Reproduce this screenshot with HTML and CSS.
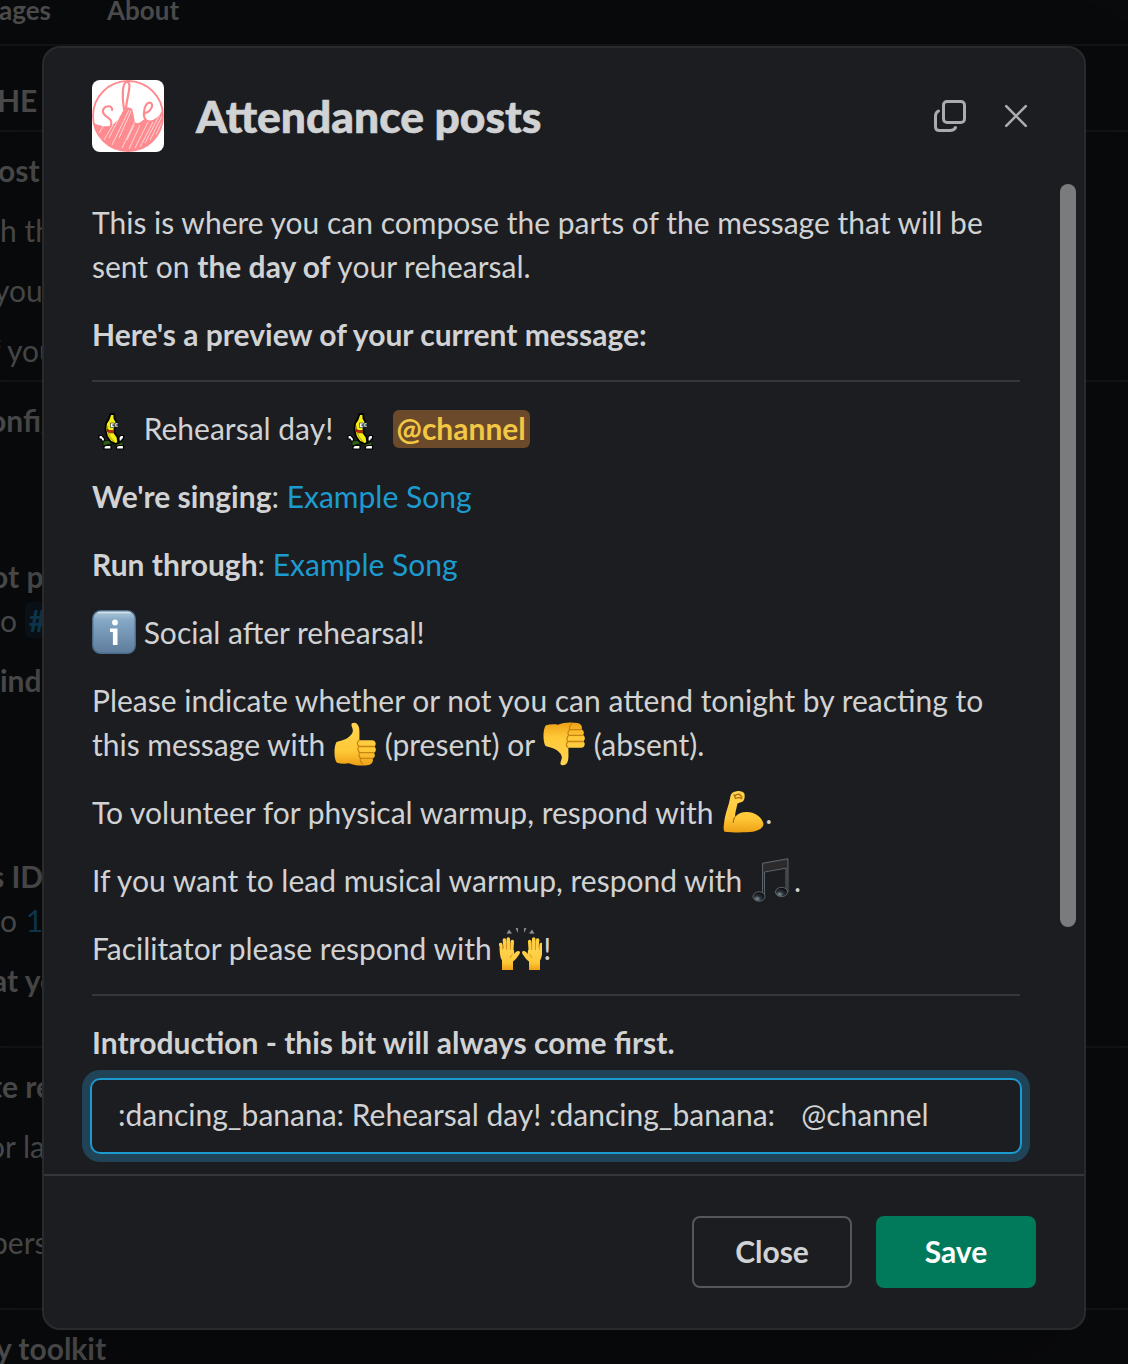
FILE: index.html
```html
<!DOCTYPE html>
<html lang="en">
<head>
<meta charset="utf-8">
<title>Attendance posts</title>
<link rel="stylesheet" href="styles.css">
</head>
<body>
<svg width="0" height="0" class="defs" aria-hidden="true">
  <defs>
    <linearGradient id="skin" x1="0" y1="0" x2="0" y2="1"><stop offset="0" stop-color="#ffd451"/><stop offset=".65" stop-color="#ffc937"/><stop offset="1" stop-color="#eda016"/></linearGradient>
    <linearGradient id="tile" x1="0" y1="0" x2="0" y2="1"><stop offset="0" stop-color="#b4cadb"/><stop offset=".22" stop-color="#84a8c6"/><stop offset="1" stop-color="#5e7c9b"/></linearGradient>
    <linearGradient id="note" x1="0" y1="0" x2="0" y2="1"><stop offset="0" stop-color="#3c3a3b"/><stop offset="1" stop-color="#18191d"/></linearGradient>
    <radialGradient id="ball" cx=".35" cy=".75" r=".7"><stop offset="0" stop-color="#84939e"/><stop offset=".45" stop-color="#2a3238"/><stop offset="1" stop-color="#0b0d10"/></radialGradient>
    <symbol id="banana" viewBox="0 0 44 44">
      <path fill="#2f5c16" stroke="#0b1a05" d="M11 34.500h7l4 3h5l4-2v5h-6l-5-3-4 1-5 1.500z"/>
      <path fill="#f3ec16" stroke="#000" stroke-width="1.800" d="M18.500 8h3.700l.3 4.500 2 3.500-.5 4-1.500 2.500v4.500l3 4 .8 5.500-2.300 1.500-5.500-2.500-3.500-5-1.500-6.500.5-6.500 2.500-4z"/>
      <path fill="none" stroke="#b9ab0d" stroke-width="1.200" d="M15.500 20v5l2.500 6 4 5"/>
      <path fill="#fff" stroke="#222" stroke-width=".6" d="M18.500 17h3.800v4.500h-3.800zM23 17h3v4h-3z"/>
      <path fill="#35535f" d="M20.500 18.200h1.800v2h-1.800zM24.300 18h1.700v2h-1.700z"/>
      <path fill="#d8210b" stroke="#5b0c04" stroke-width=".6" d="M15 23l2.500 1.500h4v2.300h-4L15 25z"/>
      <g fill="#fff" stroke="#000" stroke-width="1.200">
        <path d="M7 29.500h3l2.500 3V35H10l-1-2H7zM31.500 29.500h-3l-1.500 2V35h2.500l.8-2h1.200zM12 40.500l2-1h5V43h-7zM24.500 40.500l2-1h5V43h-7z"/>
      </g>
    </symbol>
    <symbol id="thumb" viewBox="0 0 44 44">
      <path fill="url(#skin)" d="M19 1.200c3-1.500 6 .4 7 4.200.8 3.300.3 8.600.4 12.800H39c4 0 4.800 4.600 2.300 6.500 2.300 1.600 2 4.900-.3 6.200 1.500 1.800 1 4.700-1.500 5.500 1.200 2.600-.2 5.800-3.800 6.500-6.500 1.200-13.700 1-19.700-1.600-4.200.7-8.600.5-12-.6C1 37.500.5 25 3.500 20c3-1.200 7.500-1.700 10.700-3.800C17.500 14 20.300 11 19.800 8 19.500 5.500 17.500 3 19 1.200z"/>
      <path fill="none" stroke="#cb8413" stroke-width="1.300" stroke-linecap="round" d="M26 18.500c-2 1.300-2.300 4.300 0 5.900-1.600 1.700-1.300 4.900.7 6.200-1.300 1.700-.8 4.400 1 5.400-.8 2 0 5 2 6M26.500 24.500H41M27 30.700h13.500M28 36.300h11"/>
    </symbol>
    <symbol id="arm" viewBox="0 0 44 44">
      <path fill="url(#skin)" d="M9.500 6c.5-3 3-4.600 5.500-4.600 3.500-1 7.500.3 8.300 2.200.7 2.500.5 6.500-1.500 8-1.700 1-3.600 1.100-5.300 2-1 4.500-2.500 9.500-2.500 13.500 3-3.700 7-5.300 12-5.100 8.500.3 15.500 5.500 16.500 12-.5 5.500-8 8-17 8.300-7.500.2-15.500.2-22-.6C2 39.500 2.800 36 3.200 32c.6-6 3-13 4.800-19z"/>
      <path fill="none" stroke="#a96b14" stroke-width="1.200" stroke-linecap="round" d="M14.500 5.500c1.500-1.800 4-1.300 4.800 0M15 8.300c1.700-.8 3.800-.8 5.800.3M13 4.500l1.500 4M18 4l3 3M13.500 27.500c-.7 1.800-1.300 3-1.300 5"/>
    </symbol>
    <symbol id="music" viewBox="0 0 44 44">
      <g stroke="#68737c" stroke-width=".8">
        <path fill="url(#note)" d="M12.500 5.200 38 .7v33.500h-2V10.200L14.500 14v25h-2z"/>
        <path fill="#2d2a2b" d="M13.500 6.300 37 2v7.200l-23.500 4z" stroke="none"/>
        <ellipse cx="9" cy="38.500" rx="6" ry="4.700" fill="url(#ball)"/>
        <ellipse cx="31.500" cy="34" rx="6" ry="4.700" fill="url(#ball)"/>
      </g>
    </symbol>
    <symbol id="hands" viewBox="0 0 44 44">
      <g id="one-hand">
        <path fill="none" stroke="#ffce42" stroke-width="3.500" stroke-linecap="round" d="M2.700 18.500 5 27M6.400 14 7.500 26M10.300 13l.2 13M14.300 15.500 13.500 27"/>
        <path fill="url(#skin)" d="M4 44V34.500C1.800 31 1.800 26 1.500 22L16 24l.3 4c1.200-1.600 2.500-3 4.300-2.900 1.700.3 1.700 1.800.7 3.100-2 2.500-3.500 5.500-6.300 7.300V44z"/>
        <path fill="none" stroke="#cf8a18" stroke-width=".8" d="M4.700 19v5M8.500 17v7M12.400 17v7M14.800 28c-1.800 1-2.300 2.500-2.300 4"/>
      </g>
      <use href="#one-hand" transform="matrix(-1 0 0 1 46 0)"/>
      <path fill="#8d8f92" d="m11 3.500 3 4-5.500.3zM17.500 2l2.600.3-.3 4.700zM28.500 2l-2.600.3.300 4.700zM34 3.500l-3 4 5.500.3z"/>
    </symbol>
  </defs>
</svg>

<div class="page" aria-hidden="true">
  <nav class="tabs"><span>ages</span><span>About</span></nav>
  <div class="strip heading">HE</div>
  <div class="group">
    <p class="strong ost">ost</p>
    <p class="gap">h th</p>
    <p class="gap you">your</p>
    <p class="gap f-you">f your</p>
  </div>
  <div class="group config">
    <p class="strong onfig">onfig</p>
    <p class="strong space-lg clip-o">ot po</p>
    <p><span>o</span> <span class="tag">#r</span></p>
    <p class="strong gap">inder</p>
    <p class="strong space-xl clip-s">s ID:</p>
    <p><span>o</span> <span class="blue">16</span></p>
    <p class="strong gap clip-at">at you</p>
  </div>
  <div class="group reply">
    <p class="strong clip-te">te rep</p>
    <p class="gap or-last">or last</p>
    <p class="space-sm clip-p">pers</p>
  </div>
  <div class="group last"><p class="strong clip-y">y toolkit</p></div>
</div>

<section class="modal" role="dialog" aria-labelledby="title">
  <header class="modal-head">
    <svg class="logo" viewBox="0 0 72 72">
      <defs><clipPath id="disc"><circle cx="36" cy="36" r="35"/></clipPath></defs>
      <rect width="72" height="72" fill="#fff"/>
      <g clip-path="url(#disc)">
        <path fill="#fd8b90" d="M0 42c8 5 15 5 20 3 5-3 8-8 12-16 2-2 6-2 8 0 2 5 2 12 4 14 4 1 6-3 9-4 3 2 8 2 11-1 4-3 6-7 8-10v46H0z"/>
        <path stroke="#fff" stroke-width=".8" opacity=".8" d="M7 53l5-8M12 60l9-15M17 58l10-20M20 65l17-35M27 58l12-27M30 68l13-27M35 60l7-15M37 69l11-24M43 68l13-26M48 67l13-25M53 63l15-29M58 60l12-24M64 55l6-13"/>
      </g>
      <circle cx="36" cy="36" r="35" fill="none" stroke="#fd8b90" stroke-width="1.800"/>
      <path fill="none" stroke="#fd8b90" stroke-width="2.200" stroke-linecap="round" d="M20 30c1-5-7-5-9 0-2 7 11 7 8 15M32 29C30 18 30 2 35 2c6 0-1 17-1 28M53 33c5-1 9-7 6-10-4-2-7 4-7 10-.5 4 1 6 2 7"/>
    </svg>
    <h1 id="title">Attendance posts</h1>
    <svg class="head-icon" viewBox="0 0 40 40"><g fill="none" stroke="#ababad" stroke-width="3" stroke-linecap="round"><rect x="13.500" y="5.500" width="21" height="21" rx="3.500"/><path d="M8.500 15C6.500 16 5.500 17.500 5.500 20v10.500c0 2.500 1.500 4 4 4H20c2.500 0 4.500-1 5.500-3"/></g></svg>
    <svg class="head-icon close-icon" viewBox="0 0 40 40"><path fill="none" stroke="#ababad" stroke-width="2.600" stroke-linecap="round" d="m10.200 10.200 19.600 19.600m0-19.600L10.200 29.800"/></svg>
  </header>

  <div class="modal-body">
    <div class="content">
      <p>This is where you can compose the parts of the message that will be sent on <b>the day of</b> your rehearsal.</p>
      <p><b>Here's a preview of your current message:</b></p>
      <hr>
      <p><svg class="emoji"><use href="#banana"/></svg> Rehearsal day! <svg class="emoji"><use href="#banana"/></svg> <span class="mention">@channel</span></p>
      <p><b>We're singing</b>: <a>Example Song</a></p>
      <p><b>Run through</b>: <a>Example Song</a></p>
      <p><svg class="emoji" viewBox="0 0 44 44"><rect x=".7" y=".7" width="42.600" height="42.600" rx="8" fill="url(#tile)" stroke="#4c6c8b" stroke-width="1.400"/><path d="M6 2.500h32" stroke="#d6e2ea" stroke-width="1.500" stroke-linecap="round"/><circle cx="23" cy="12.500" r="2.900" fill="#fff"/><path fill="#fff" d="M18 18.500h7.500V35h-4.600V22H18z"/></svg> Social after rehearsal!</p>
      <p>Please indicate whether or not you can attend tonight by reacting to this message with <svg class="emoji"><use href="#thumb"/></svg> (present) or <svg class="emoji down"><use href="#thumb"/></svg> (absent).</p>
      <p>To volunteer for physical warmup, respond with <svg class="emoji"><use href="#arm"/></svg>.</p>
      <p>If you want to lead musical warmup, respond with <svg class="emoji"><use href="#music"/></svg>.</p>
      <p>Facilitator please respond with <svg class="emoji hands"><use href="#hands"/></svg>!</p>
      <hr>
      <label for="intro">Introduction - this bit will always come first.</label>
      <div class="field" id="intro">:dancing_banana: Rehearsal day! :dancing_banana: &nbsp; <span class="handle">@channel</span></div>
    </div>
    <div class="scrollbar"></div>
  </div>

  <footer class="modal-foot">
    <button class="btn">Close</button>
    <button class="btn primary">Save</button>
  </footer>
</section>
</body>
</html>
```
FILE: styles.css
```css
* { box-sizing: border-box; }

body {
  margin: 0;
  height: 1364px;
  overflow: hidden;
  position: relative;
  background: #090a0c;
  color: #d1d2d3;
  font: 30px/44px Lato, "Liberation Sans", sans-serif;
}

p, h1 { margin: 0; }
.defs { position: absolute; }

/* Dimmed page underneath the dialog */
.page { color: #4b4b4b; white-space: nowrap; }
.tabs {
  display: flex;
  gap: 56px;
  height: 46px;
  margin-left: -1px;
  border-bottom: 2px solid #131416;
  font-size: 26px;
  font-weight: 700;
  line-height: 20px;
}
.strip { height: 86px; padding-top: 32px; border-bottom: 2px solid #131416; }
.heading { font-weight: 700; }
.strip.heading { text-indent: -3px; }
.group { border-bottom: 2px solid #131416; height: 250px; padding-top: 16px; }
.group.config { height: 666px; }
.group.reply { height: 262px; }
.group.last { border: 0; height: 54px; }
.strong { font-weight: 700; }
.gap { margin-top: 16px; }
.space-sm { margin-top: 52px; }
.space-lg { margin-top: 112px; }
.space-xl { margin-top: 152px; }
.ost { text-indent: -2px; }
.you { text-indent: -6px; }
.f-you { text-indent: -10px; }
.onfig { text-indent: -11px; }
.or-last { text-indent: -12px; }
.clip-o { text-indent: -9px; }
.clip-p { text-indent: -9px; }
.clip-s { text-indent: -9px; }
.clip-at { text-indent: -8px; }
.clip-te { text-indent: -9px; }
.clip-y { text-indent: -4px; }
.tag { padding: 0 4px; border-radius: 6px; background: #0a1218; color: #0e3a52; font-weight: 700; }
.blue { color: #0e3a52; margin-left: 1px; }

/* Dialog */
.modal {
  position: absolute;
  left: 42px;
  top: 46px;
  width: 1044px;
  height: 1284px;
  display: flex;
  flex-direction: column;
  border: 2px solid #292a2c;
  border-radius: 18px;
  background: #1c1d21;
  box-shadow: 0 36px 96px rgba(0, 0, 0, .2);
  overflow: hidden;
}
.modal-head { display: flex; align-items: center; height: 136px; padding: 0 48px; }
.logo { width: 72px; height: 72px; border-radius: 8px; margin-right: 32px; }
.modal-head h1 {
  flex: 1;
  font-size: 44.350px;
  font-weight: 900;
  line-height: 60px;
  -webkit-text-stroke: .6px currentColor;
}
.head-icon { width: 40px; height: 40px; }
.close-icon { margin-left: 26px; }

.modal-body { flex: 1; display: flex; min-height: 0; padding-right: 8px; }
.content { flex: 1; padding: 16px 40px 0 48px; }
.content p { margin-bottom: 24px; }
b, label { font-weight: 700; }
label { display: block; }
hr { height: 2px; margin: 0 0 24px; border: 0; background: #36373a; }
a { color: #1d9bd1; }
.emoji { width: 44px; height: 44px; vertical-align: top; }
.down { transform: scaleY(-1); }
.hands { margin: 0 1px 0 -1px; overflow: visible; }
.mention { padding: 0 4px 2px; border-radius: 6px; background: #6a4a2a; color: #f2c744; font-weight: 700; }
.field {
  height: 76px;
  margin: 14px -2px 0;
  padding: 12px 26px;
  border: 2px solid #1d9bd1;
  border-radius: 10px;
  box-shadow: 0 0 0 8px #214357;
  white-space: nowrap;
}
.handle { margin-left: 3px; }
.scrollbar { width: 16px; height: 743px; border-radius: 8px; background: #7a7b7d; }

.modal-foot {
  display: flex;
  justify-content: flex-end;
  gap: 24px;
  height: 154px;
  padding: 40px 48px;
  border-top: 2px solid #36373a;
}
.btn {
  width: 160px;
  height: 72px;
  padding: 0 0 2px;
  border: 2px solid #565759;
  border-radius: 8px;
  background: none;
  color: #d1d2d3;
  font: 700 30px/44px Lato, "Liberation Sans", sans-serif;
}
.btn.primary { border-color: #007a5a; background: #007a5a; color: #fff; }
```
